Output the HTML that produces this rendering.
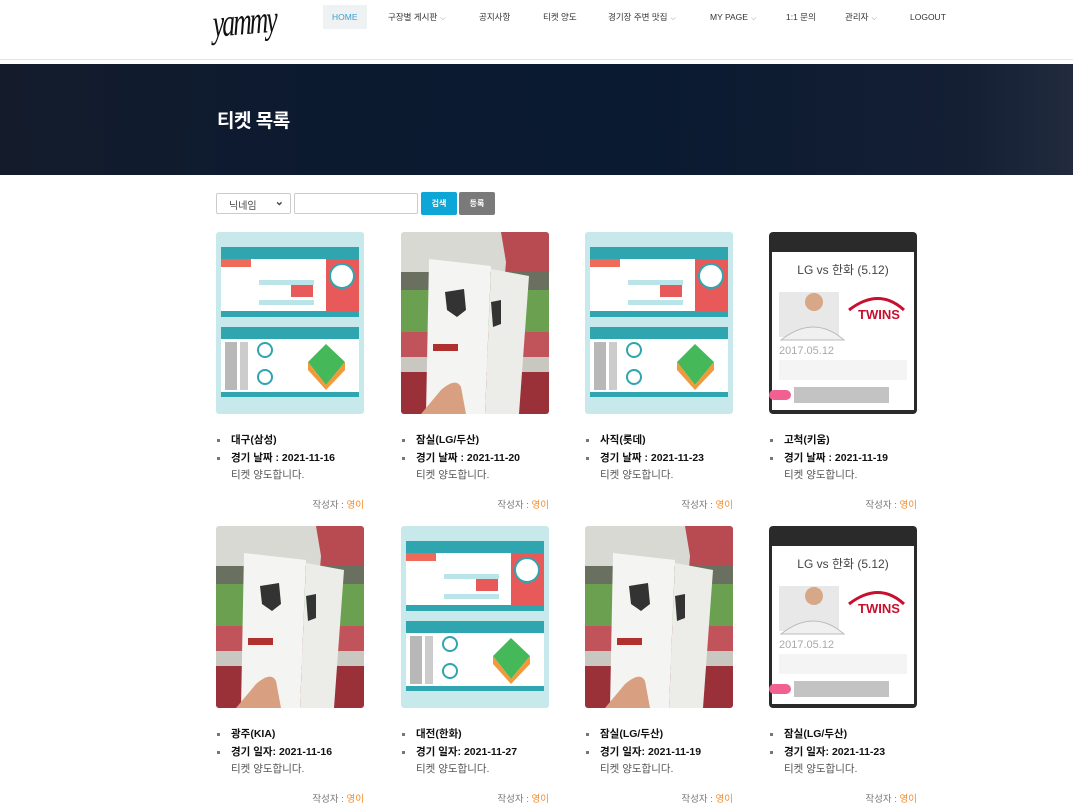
<!DOCTYPE html>
<html><head><meta charset="utf-8">
<style>
*{box-sizing:border-box;margin:0;padding:0}
body{width:1073px;height:804px;overflow:hidden;background:#fff;font-family:"Liberation Sans","Noto Sans CJK KR",sans-serif;position:relative}
.hdr{position:absolute;left:0;top:0;width:1073px;height:60px;border-bottom:1px solid #e4e4e4;background:#fff}
.logo{position:absolute;left:212px;top:2px;font-family:"Liberation Serif",serif;font-style:italic;font-size:27px;color:#111;letter-spacing:-2px;transform:scale(0.95,1.45) rotate(-3deg);transform-origin:left top}
.nav{position:absolute;top:5px;font-size:8.5px;color:#333;height:24px;line-height:24px}
.nav.home{background:#eef2f3;color:#3aa0d0;padding:0 9px;left:323px}
.caret{font-size:7px;color:#888;margin-left:3px}
.banner{position:absolute;left:0;top:64px;width:1073px;height:111px;background:linear-gradient(90deg,#141c2c 0%,#0c1a30 30%,#0a1a30 60%,#141f34 90%,#222b3e 100%)}
.banner h1{position:absolute;left:217px;top:42px;color:#fff;font-size:19px;font-weight:bold;letter-spacing:-0.5px}
.sel{position:absolute;left:216px;top:193px;width:75px;height:21px;border:1px solid #ccc;border-radius:2px;font-size:10px;color:#444;padding:3px 0 0 12px}
.inp{position:absolute;left:294px;top:193px;width:124px;height:21px;border:1px solid #ccc;border-radius:2px}
.btn{position:absolute;top:192px;height:23px;width:36px;color:#fff;font-size:8px;font-weight:bold;text-align:center;line-height:23px;border-radius:2px}
.card{position:absolute;width:160px}
.card svg{display:block;width:148px;height:182px;border-radius:3px}
.card ul{list-style:none;margin-top:19px;font-size:10.5px;color:#111;font-weight:bold}
.card li{position:relative;padding-left:15px;height:18px;line-height:14px}
.card li:before{content:"";position:absolute;left:1px;top:6px;width:3px;height:3px;background:#777}
.card .d{padding-left:15px;font-size:10.5px;color:#555;margin-top:-2px}
.card .a{font-size:9.5px;color:#777;text-align:right;width:148px;margin-top:15px}
.card .a span{color:#f28a2a}
</style></head><body>
<svg width="0" height="0" style="position:absolute">
<defs>
<symbol id="tk" viewBox="0 0 148 182">
<rect width="148" height="182" fill="#c7e9eb"/>
<rect x="5" y="15" width="138" height="70" fill="#fff"/>
<rect x="5" y="15" width="138" height="12" fill="#2fa5af"/>
<rect x="5" y="27" width="30" height="8" fill="#f06a5a"/>
<rect x="110" y="27" width="33" height="52" fill="#e85a5a"/>
<circle cx="126" cy="44" r="12" fill="#fff" stroke="#2fa5af" stroke-width="2"/>
<rect x="75" y="52" width="22" height="13" fill="#e85a5a"/>
<rect x="43" y="48" width="55" height="5" fill="#b9e4e8"/>
<rect x="43" y="68" width="55" height="5" fill="#b9e4e8"/>
<rect x="5" y="79" width="138" height="6" fill="#2fa5af"/>
<rect x="5" y="95" width="138" height="70" fill="#fff"/>
<rect x="5" y="95" width="138" height="12" fill="#2fa5af"/>
<rect x="9" y="110" width="12" height="48" fill="#888" opacity=".6"/>
<rect x="24" y="110" width="8" height="48" fill="#999" opacity=".5"/>
<circle cx="49" cy="118" r="7" fill="#fff" stroke="#2fa5af" stroke-width="2"/>
<circle cx="49" cy="145" r="7" fill="#fff" stroke="#2fa5af" stroke-width="2"/>
<path d="M92 130 L110 112 L129 130 L110 153 Z" fill="#45b85a"/>
<path d="M92 130 L110 153 L129 130 L129 138 L110 158 L92 138Z" fill="#f29a3a"/>
<rect x="5" y="160" width="138" height="5" fill="#2fa5af"/>
</symbol>
<symbol id="ph" viewBox="0 0 148 182">
<rect width="148" height="182" fill="#d9d9d3"/>
<path d="M100 0 H148 V90 H100 L105 30Z" fill="#b84a52"/>
<rect x="0" y="40" width="148" height="20" fill="#6a7060"/>
<rect x="0" y="58" width="148" height="45" fill="#6aa050"/>
<rect x="0" y="100" width="148" height="40" fill="#c0545a"/>
<rect x="0" y="135" width="148" height="47" fill="#9a3038"/>
<rect x="0" y="125" width="148" height="15" fill="#c8c8c0"/>
<path d="M28 27 L90 34 L84 182 L25 182Z" fill="#f4f4f2"/>
<path d="M90 37 L128 44 L118 182 L84 182Z" fill="#ecece8"/>
<path d="M44 60 L63 57 L65 78 L56 85 L46 78Z" fill="#333"/>
<path d="M90 70 L100 68 L100 92 L92 95Z" fill="#333"/>
<rect x="32" y="112" width="25" height="7" fill="#b03030"/>
<path d="M20 182 L40 158 Q55 145 60 155 L65 182Z" fill="#d8a080"/>
</symbol>
<symbol id="pn" viewBox="0 0 148 182">
<rect width="148" height="182" rx="4" fill="#2a2a2a"/>
<rect x="3" y="20" width="142" height="158" fill="#fff"/>
<text x="74" y="42" font-size="12" text-anchor="middle" fill="#444" font-family="Liberation Sans,Noto Sans CJK KR,sans-serif">LG vs 한화 (5.12)</text>
<rect x="10" y="60" width="60" height="45" fill="#e8e8e8"/>
<circle cx="45" cy="70" r="9" fill="#d6a888"/>
<path d="M12 108 Q45 82 75 108Z" fill="#f0f0f0" stroke="#bbb"/>
<text x="110" y="87" font-size="13" font-weight="bold" text-anchor="middle" fill="#c8102e" font-family="Liberation Sans,sans-serif">TWINS</text>
<path d="M80 78 Q110 55 135 78" fill="none" stroke="#c8102e" stroke-width="3"/>
<text x="10" y="122" font-size="11" fill="#aaa" font-family="Liberation Sans,sans-serif">2017.05.12</text>
<rect x="10" y="128" width="128" height="20" fill="#f4f4f4"/>
<rect x="25" y="155" width="95" height="16" fill="#aaa" opacity=".7"/>
<rect x="0" y="158" width="22" height="10" rx="5" fill="#f06090"/>
</symbol>
</defs></svg>

<div class="hdr">
<div class="logo">yammy</div>
<div class="nav home">HOME</div>
<div class="nav" style="left:388px">구장별 게시판<span class="caret">⌵</span></div>
<div class="nav" style="left:479px">공지사항</div>
<div class="nav" style="left:543px">티켓 양도</div>
<div class="nav" style="left:608px">경기장 주변 맛집<span class="caret">⌵</span></div>
<div class="nav" style="left:710px">MY PAGE<span class="caret">⌵</span></div>
<div class="nav" style="left:786px">1:1 문의</div>
<div class="nav" style="left:845px">관리자<span class="caret">⌵</span></div>
<div class="nav" style="left:910px">LOGOUT</div>
</div>
<div class="banner"><h1>티켓 목록</h1></div>

<div class="sel">닉네임<span style="position:absolute;right:6px;top:1px;font-weight:bold;font-size:11px">⌄</span></div>
<div class="inp"></div>
<div class="btn" style="left:421px;background:#0ea6d6">검색</div>
<div class="btn" style="left:459px;background:#7a7a7a">등록</div>

<div class="card" style="left:216px;top:232px"><svg><use href="#tk"/></svg><ul><li>대구(삼성)</li><li>경기 날짜 : 2021-11-16</li></ul><div class="d">티켓 양도합니다.</div><div class="a">작성자 : <span>영이</span></div></div>
<div class="card" style="left:401px;top:232px"><svg><use href="#ph"/></svg><ul><li>잠실(LG/두산)</li><li>경기 날짜 : 2021-11-20</li></ul><div class="d">티켓 양도합니다.</div><div class="a">작성자 : <span>영이</span></div></div>
<div class="card" style="left:585px;top:232px"><svg><use href="#tk"/></svg><ul><li>사직(롯데)</li><li>경기 날짜 : 2021-11-23</li></ul><div class="d">티켓 양도합니다.</div><div class="a">작성자 : <span>영이</span></div></div>
<div class="card" style="left:769px;top:232px"><svg><use href="#pn"/></svg><ul><li>고척(키움)</li><li>경기 날짜 : 2021-11-19</li></ul><div class="d">티켓 양도합니다.</div><div class="a">작성자 : <span>영이</span></div></div>

<div class="card" style="left:216px;top:526px"><svg><use href="#ph"/></svg><ul><li>광주(KIA)</li><li>경기 일자: 2021-11-16</li></ul><div class="d">티켓 양도합니다.</div><div class="a">작성자 : <span>영이</span></div></div>
<div class="card" style="left:401px;top:526px"><svg><use href="#tk"/></svg><ul><li>대전(한화)</li><li>경기 일자: 2021-11-27</li></ul><div class="d">티켓 양도합니다.</div><div class="a">작성자 : <span>영이</span></div></div>
<div class="card" style="left:585px;top:526px"><svg><use href="#ph"/></svg><ul><li>잠실(LG/두산)</li><li>경기 일자: 2021-11-19</li></ul><div class="d">티켓 양도합니다.</div><div class="a">작성자 : <span>영이</span></div></div>
<div class="card" style="left:769px;top:526px"><svg><use href="#pn"/></svg><ul><li>잠실(LG/두산)</li><li>경기 일자: 2021-11-23</li></ul><div class="d">티켓 양도합니다.</div><div class="a">작성자 : <span>영이</span></div></div>
</body></html>
